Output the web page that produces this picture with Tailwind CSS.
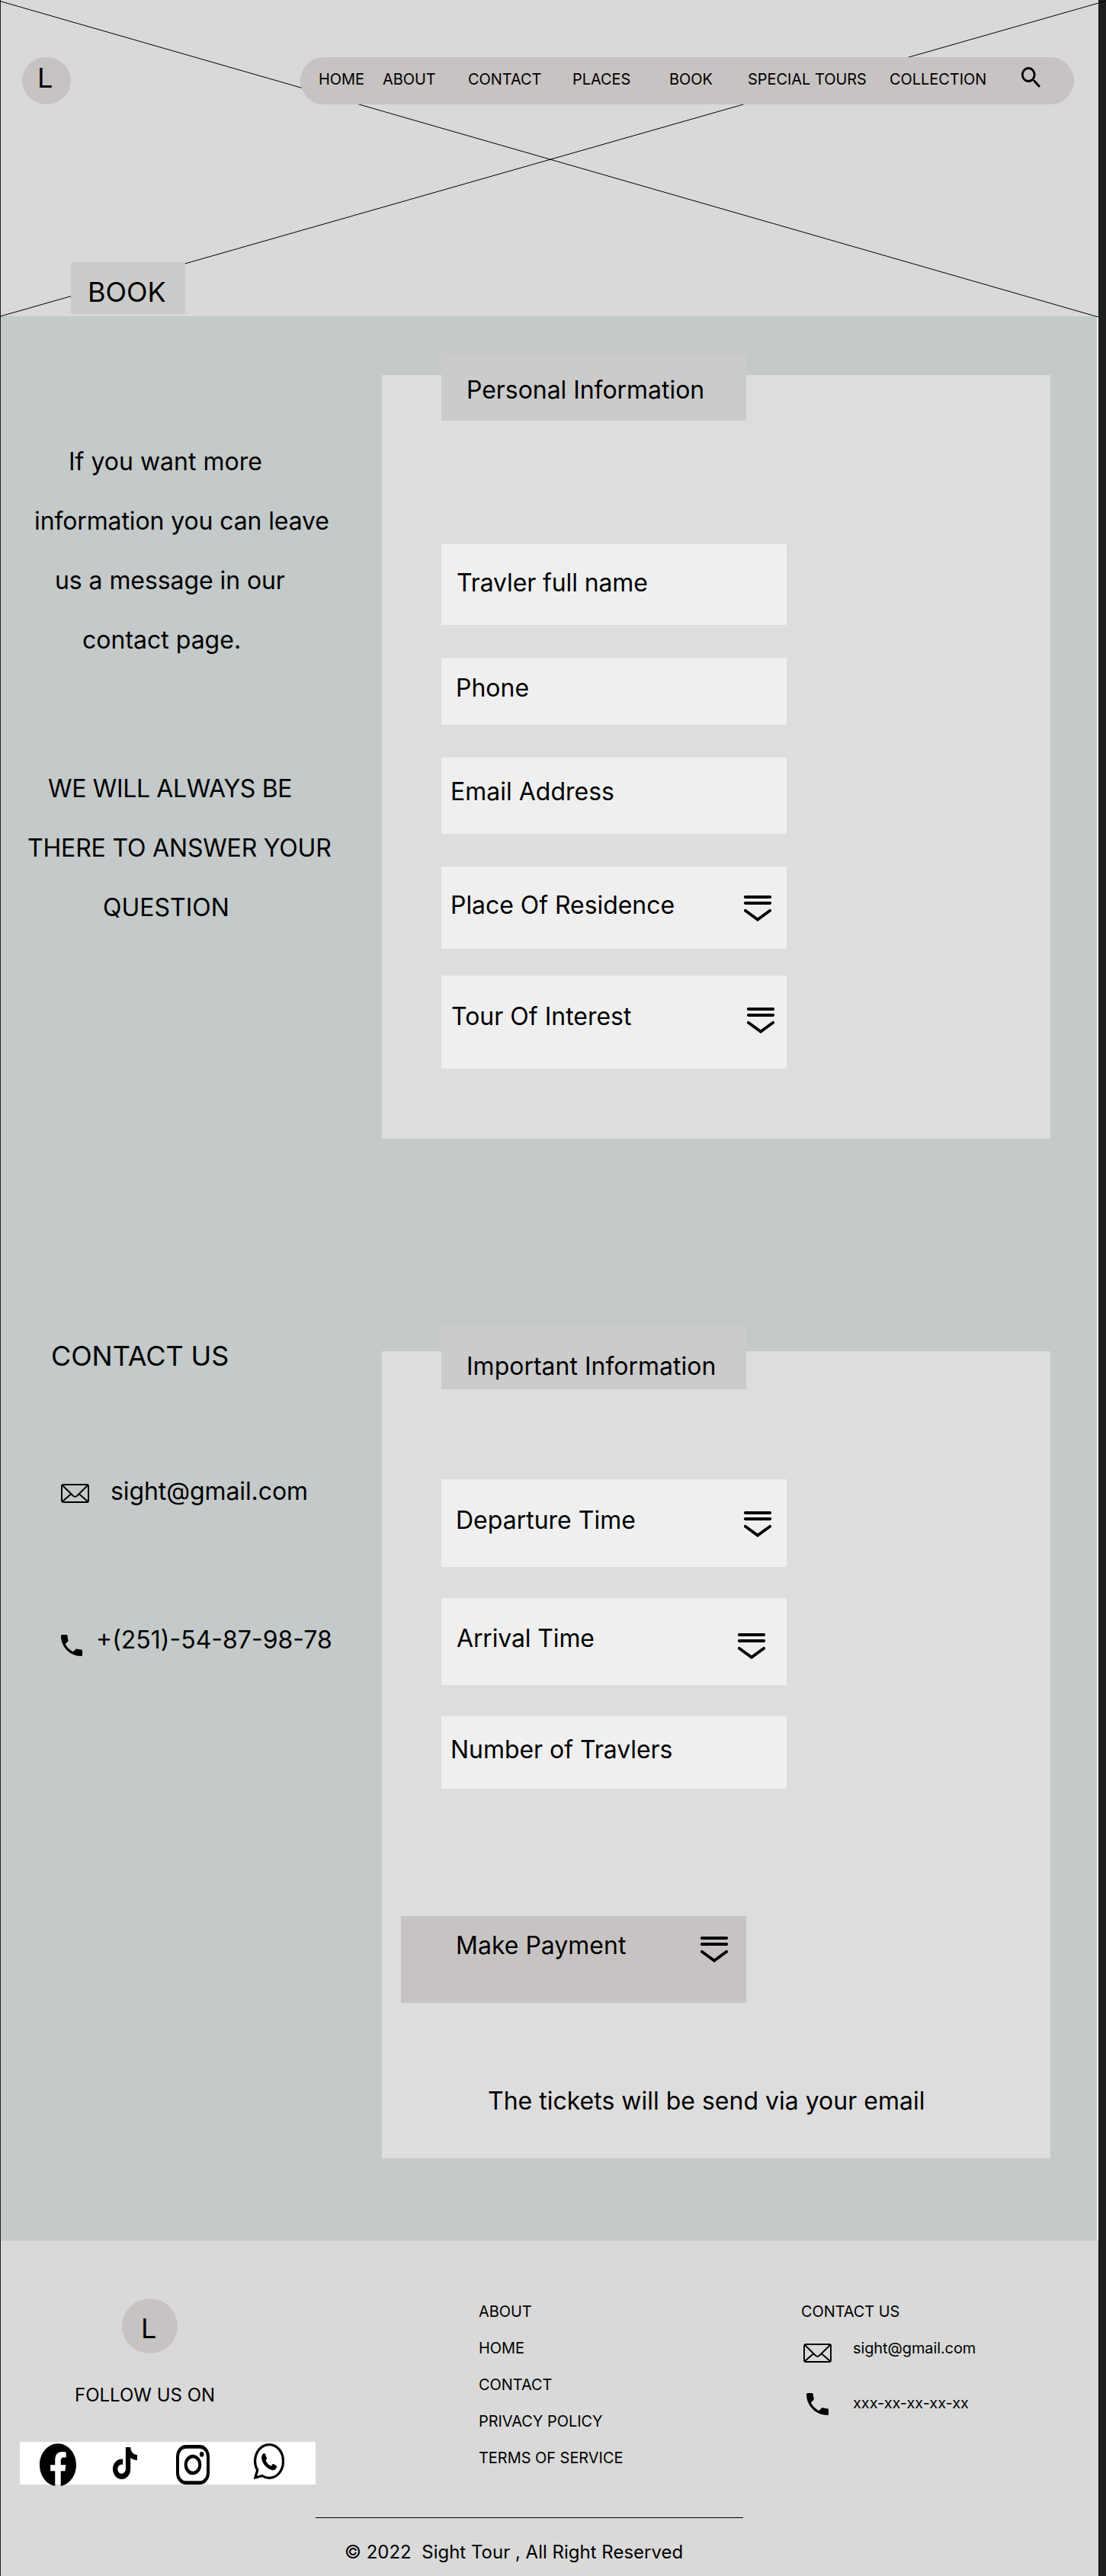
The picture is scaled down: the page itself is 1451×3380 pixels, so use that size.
<!DOCTYPE html>
<html lang="en">
<head>
<meta charset="utf-8">
<title>Sight Tour - Book</title>
<script src="https://cdn.jsdelivr.net/npm/@tailwindcss/browser@4"></script>
</head>
<body class="bg-[#1e1e1e] font-['Inter',sans-serif] text-black">
<svg class="hidden">
  <symbol id="drop" viewBox="0 0 36 34"><path d="M1.8 2h32.4M1.8 10h32.4M1.8 19.8 18 31.6 34.2 19.8" fill="none" stroke="#000" stroke-width="3.8" stroke-linecap="round"/></symbol>
  <symbol id="mail" viewBox="0 0 37 25"><path d="M3 1h31a2 2 0 0 1 2 2v19a2 2 0 0 1-2 2H3a2 2 0 0 1-2-2V3a2 2 0 0 1 2-2zM2 2l14.3 14q2.2 1.8 4.4 0L35 2M2 23l11.5-10M35 23 23.500 13" fill="none" stroke="#000" stroke-width="1.9"/></symbol>
  <symbol id="phone" viewBox="3 3 18 18" preserveAspectRatio="none"><path d="M6.620 10.790c1.440 2.830 3.760 5.140 6.590 6.590l2.200-2.200c.27-.27.67-.36 1.020-.24 1.120.37 2.330.57 3.570.57.55 0 1 .45 1 1V20c0 .55-.45 1-1 1-9.390 0-17-7.610-17-17 0-.55.45-1 1-1h3.500c.55 0 1 .45 1 1 0 1.250.2 2.450.57 3.570.11.35.03.74-.25 1.020l-2.200 2.200z"/></symbol>
</svg>
<div class="flex h-[3380px] w-[1441px] flex-col pl-px">

  <header class="relative h-[415px] bg-[#d9d9d9]">
    <svg class="absolute top-0 -left-px z-10 h-[417px] w-[1451px]" viewBox="0 0 1451 417" fill="none" stroke="#000" stroke-width="1"><path d="M0 1.500 1441 416M0 415.200 1451 1.200"/></svg>
    <div class="relative z-20 flex items-start pt-[75px] pl-[28px]">
      <div class="h-[62px] w-16 rounded-[50%] bg-[#c7c3c2] pt-[5px] pl-[20px] text-[36px] leading-[44px]">L</div>
      <nav class="ml-[301px] flex h-[62px] w-[1015px] rounded-full bg-[#c7c3c2] pt-[17px] pl-[24px] text-xl leading-6 tracking-[-0.05px] whitespace-nowrap">
        <a class="w-[84px] shrink-0">HOME</a>
        <a class="w-[112px] shrink-0">ABOUT</a>
        <a class="w-[137px] shrink-0">CONTACT</a>
        <a class="w-[127px] shrink-0">PLACES</a>
        <a class="w-[103px] shrink-0">BOOK</a>
        <a class="w-[186px] shrink-0">SPECIAL TOURS</a>
        <a class="w-[173px] shrink-0">COLLECTION</a>
        <svg class="-mt-[4px] h-[27px] w-[25px] shrink-0" viewBox="3 3 17.490 17.490" preserveAspectRatio="none"><path d="M15.500 14h-.79l-.28-.27C15.410 12.590 16 11.110 16 9.500 16 5.910 13.090 3 9.500 3S3 5.910 3 9.500 5.910 16 9.500 16c1.610 0 3.090-.59 4.230-1.570l.27.28v.79l5 4.990L20.490 19l-4.990-5zm-6 0C7.010 14 5 11.990 5 9.500S7.010 5 9.500 5 14 7.010 14 9.500 11.990 14 9.500 14z"/></svg>
      </nav>
    </div>
    <h1 class="relative z-20 mt-[207px] ml-[92px] h-[68px] w-[150px] bg-[#cbcbcb] pt-[17px] pl-[22px] text-[36px] leading-[44px]">BOOK</h1>
  </header>

  <main class="flex h-[2525px] border-r-2 border-white bg-[#c4c9c9] text-[32px] leading-[39px] whitespace-nowrap">
    <aside class="w-[500px] shrink-0 pt-[152px]">
      <div class="leading-[78px]">
        <p class="pl-[89px]">If you want more</p>
        <p class="pl-[44px] tracking-[-0.12px]">information you can leave</p>
        <p class="pl-[71px] tracking-[-0.08px]">us a message in our</p>
        <p class="pl-[107px]">contact page.</p>
      </div>
      <div class="mt-[117px] leading-[78px]">
        <p class="pl-[62px] tracking-[-0.35px]">WE WILL ALWAYS BE</p>
        <p class="pl-[35px] tracking-[-0.18px]">THERE TO ANSWER YOUR</p>
        <p class="pl-[134px]">QUESTION</p>
      </div>
      <h2 class="mt-[527px] pl-[66px] text-[36px] leading-[44px] tracking-[-0.1px]">CONTACT US</h2>
      <div class="mt-[136px] flex pl-[79px]">
        <svg class="mt-[10px] h-[25px] w-[37px]"><use href="#mail"/></svg>
        <span class="ml-[28px] tracking-[-0.1px]">sight@gmail.com</span>
      </div>
      <div class="mt-[155px] flex pl-[79px]">
        <svg class="mt-[14px] h-[28px] w-[28px]"><use href="#phone"/></svg>
        <span class="ml-[18px] pt-px">+(251)-54-87-98-78</span>
      </div>
    </aside>

    <div class="w-[877px] shrink-0 pt-[77px]">
      <section class="h-[1002px] bg-[#ddd] pl-[78px]">
        <div class="-mt-[28px] inline-block h-[88px] w-[400px] bg-[#cbcbcb] pt-[28px] pl-[33px] align-top tracking-[-0.05px]">Personal Information</div>
        <div class="mt-[162px] h-[106px] w-[453px] bg-[#efefef] pt-[31px] pl-[20px] tracking-[-0.12px]">Travler full name</div>
        <div class="mt-[43px] h-[88px] w-[453px] bg-[#efefef] pt-[20px] pl-[19px]">Phone</div>
        <div class="mt-[43px] h-[100px] w-[453px] bg-[#efefef] pt-[25px] pl-[12px]">Email Address</div>
        <div class="mt-[43px] flex h-[108px] w-[453px] justify-between bg-[#efefef] pt-[31px] pr-[20px] pl-[12px] tracking-[-0.05px]">Place Of Residence<svg class="mt-[7px] h-[34px] w-9"><use href="#drop"/></svg></div>
        <div class="mt-[35px] flex h-[122px] w-[453px] justify-between bg-[#efefef] pt-[34px] pr-[16px] pl-[13px]">Tour Of Interest<svg class="mt-[8px] h-[34px] w-9"><use href="#drop"/></svg></div>
      </section>

      <section class="mt-[279px] h-[1059px] bg-[#ddd] pl-[78px]">
        <div class="-mt-[34px] inline-block h-[84px] w-[400px] bg-[#cbcbcb] pt-[34px] pl-[33px] align-top">Important Information</div>
        <div class="mt-[118px] flex h-[115px] w-[453px] justify-between bg-[#efefef] pt-[34px] pr-[20px] pl-[19px]">Departure Time<svg class="mt-[8px] h-[34px] w-9"><use href="#drop"/></svg></div>
        <div class="mt-[41px] flex h-[114px] w-[453px] justify-between bg-[#efefef] pt-[33px] pr-[28px] pl-[20px] tracking-[-0.15px]">Arrival Time<svg class="mt-[13px] h-[34px] w-9"><use href="#drop"/></svg></div>
        <div class="mt-[41px] h-[95px] w-[453px] bg-[#efefef] pt-[24px] pl-[12px] tracking-[-0.05px]">Number of Travlers</div>
        <div class="mt-[167px] -ml-[53px] flex h-[114px] w-[453px] justify-between bg-[#c7c3c2] pt-[19px] pr-[24px] pl-[72px]">Make Payment<svg class="mt-[8px] h-[34px] w-9"><use href="#drop"/></svg></div>
        <p class="mt-[109px] pl-[61px]">The tickets will be send via your email</p>
      </section>
    </div>
  </main>

  <footer class="h-[440px] bg-[#d9d9d9] whitespace-nowrap">
    <div class="flex h-[363px] text-xl leading-6">
      <div class="w-[627px] shrink-0 pt-[76px] pl-[25px]">
        <div class="ml-[134px] h-[72px] w-[73px] rounded-[50%] bg-[#c7c3c2] pt-[17px] pl-[25px] text-[36px] leading-[44px]">L</div>
        <p class="mt-[40px] pl-[72px] text-2xl leading-[29px]">FOLLOW US ON</p>
        <div class="mt-[47px] flex h-[56px] w-[388px] bg-white">
          <svg class="mt-[2px] ml-[26px] h-[56px] w-12" viewBox="0 0 24 24" preserveAspectRatio="none"><path d="M24 12.073c0-6.627-5.373-12-12-12s-12 5.373-12 12c0 5.990 4.388 10.954 10.125 11.854v-8.385H7.078v-3.470h3.047V9.430c0-3.007 1.792-4.669 4.533-4.669 1.312 0 2.686.235 2.686.235v2.953H15.830c-1.491 0-1.956.925-1.956 1.874v2.250h3.328l-.532 3.470h-2.796v8.385C19.612 23.027 24 18.062 24 12.073z"/></svg>
          <svg class="mt-[7px] ml-[48px] h-[42px] w-8" viewBox="4.160 3 15.700 18" preserveAspectRatio="none"><path d="M16.600 5.820A4.278 4.278 0 0 1 15.540 3h-3.090v12.400a2.592 2.592 0 0 1-2.590 2.500c-1.420 0-2.600-1.160-2.600-2.600 0-1.720 1.660-3.010 3.370-2.480V9.660c-3.450-.46-6.470 2.220-6.470 5.640 0 3.330 2.760 5.700 5.690 5.700 3.140 0 5.690-2.550 5.690-5.700V9.010a7.350 7.350 0 0 0 4.300 1.380V7.300s-1.880.09-3.240-1.480z"/></svg>
          <svg class="mt-[4px] ml-[51px] h-[52px] w-11" viewBox="0 0 44 44" preserveAspectRatio="none" fill="none" stroke="#000" stroke-width="4"><rect x="2" y="2" width="40" height="40" rx="11"/><circle cx="22" cy="22" r="9.300"/><circle cx="33.700" cy="10.500" r="2.800" fill="#000" stroke="none"/></svg>
          <svg class="mt-[2px] ml-[58px] h-[47px] w-10" viewBox="0 0 40 47"><path d="M1.800 45 4.800 35C2.600 31.500 1.600 27.500 1.600 23.400 1.600 11 9.800 1.600 20.200 1.600S38.500 11 38.500 23.400 30.500 45.300 20.200 45.300C16.800 45.300 13.700 44.300 11 42.500Z" fill="none" stroke="#000" stroke-width="3.200"/><path d="M13.500 13C11 13.500 10 17 10.200 20 11 27.500 19 35 25.500 35.300 28.500 35 30.300 32 30 29.500L26 27C24.500 26.600 23.700 28.500 22.700 29.800 19.500 28.500 16.800 25.300 15.600 22.600 16.500 21.300 17.300 20.500 16.800 19L15 13.800Z"/></svg>
        </div>
      </div>
      <ul class="flex w-[423px] shrink-0 flex-col gap-6 pt-[81px] tracking-[-0.05px]">
        <li>ABOUT</li><li>HOME</li><li>CONTACT</li><li>PRIVACY POLICY</li><li>TERMS OF SERVICE</li>
      </ul>
      <div class="pt-[81px]">
        <p class="tracking-[-0.1px]">CONTACT US</p>
        <div class="mt-6 flex pl-[3px]">
          <svg class="mt-[6px] h-[25px] w-[37px]"><use href="#mail"/></svg>
          <span class="ml-[28px] tracking-[-0.1px]">sight@gmail.com</span>
        </div>
        <div class="mt-[41px] flex items-start pl-[7px]">
          <svg class="-mt-px h-[29px] w-[29px]"><use href="#phone"/></svg>
          <span class="ml-[32px] tracking-[-0.1px]">xxx-xx-xx-xx-xx</span>
        </div>
      </div>
    </div>
    <div class="ml-[413px] h-px w-[561px] bg-black"></div>
    <p class="mt-[30px] pl-[451px] text-2xl leading-[29px] whitespace-pre">© 2022  Sight Tour , All Right Reserved</p>
  </footer>
</div>
</body>
</html>
